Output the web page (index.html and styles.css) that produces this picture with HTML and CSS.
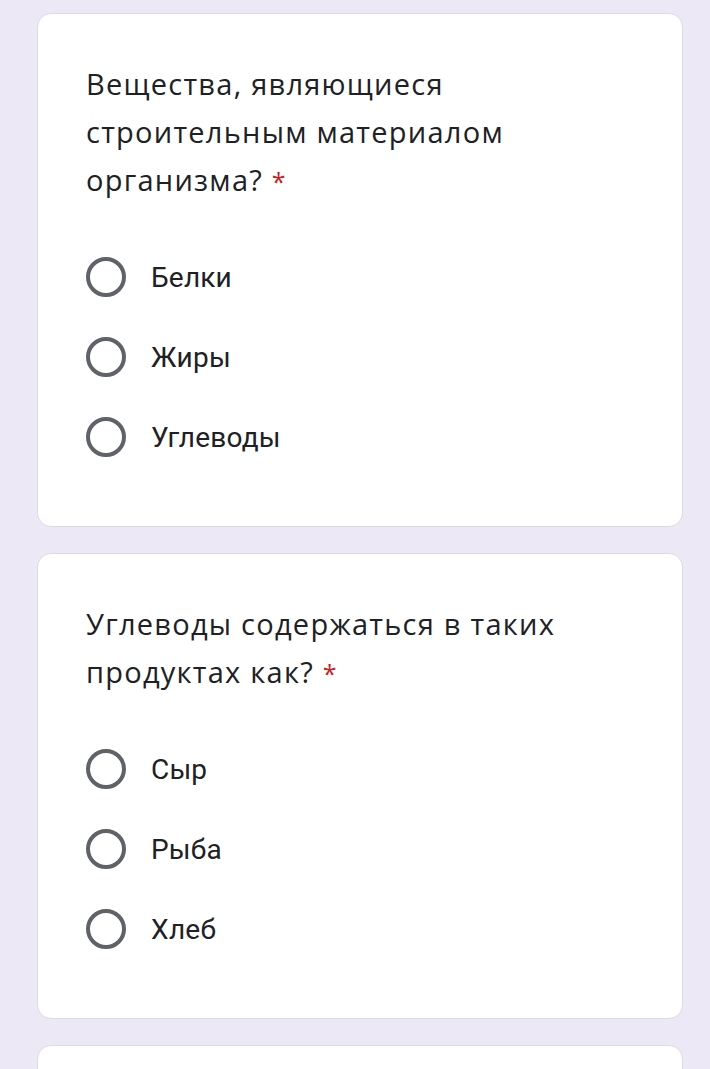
FILE: index.html
```html
<!DOCTYPE html>
<html lang="ru">
<head>
<meta charset="utf-8">
<link rel="stylesheet" href="styles.css">
</head>
<body>
<div class="page">
  <div class="card">
    <div class="question">Вещества, являющиеся строительным материалом организма? <span class="req">*</span></div>
    <div class="options">
      <div class="option"><span class="radio"></span><span class="label">Белки</span></div>
      <div class="option"><span class="radio"></span><span class="label">Жиры</span></div>
      <div class="option"><span class="radio"></span><span class="label">Углеводы</span></div>
    </div>
  </div>
  <div class="card">
    <div class="question">Углеводы содержаться в таких продуктах как? <span class="req">*</span></div>
    <div class="options">
      <div class="option"><span class="radio"></span><span class="label">Сыр</span></div>
      <div class="option"><span class="radio"></span><span class="label">Рыба</span></div>
      <div class="option"><span class="radio"></span><span class="label">Хлеб</span></div>
    </div>
  </div>
  <div class="card card-stub"></div>
</div>
</body>
</html>
```

FILE: styles.css
```css
html, body {
  margin: 0;
  padding: 0;
  background: #ece8f6;
}
.page {
  display: flex;
  flex-direction: column;
  gap: 26px;
  padding: 13px 27px 0 37px;
}
.card {
  width: 646px;
  box-sizing: border-box;
  background: #ffffff;
  border: 1px solid #dadce0;
  border-radius: 14px;
  padding: 46px 48px 49px 48px;
}
.card-stub {
  height: 200px;
}
.question {
  font-family: "Open Sans", Roboto, sans-serif;
  font-size: 29px;
  line-height: 48px;
  letter-spacing: 1.25px;
  color: #202124;
  width: 500px;
}
.req {
  color: #c5221f;
  font-size: 25px;
  line-height: 0;
  letter-spacing: 0;
}
.options {
  margin-top: 33px;
  display: flex;
  flex-direction: column;
}
.option {
  height: 80px;
  display: flex;
  align-items: center;
  gap: 25px;
}
.radio {
  width: 40px;
  height: 40px;
  box-sizing: border-box;
  border: 4px solid #5f6368;
  border-radius: 50%;
  flex: none;
}
.label {
  font-family: Roboto, sans-serif;
  font-size: 28px;
  letter-spacing: 0.2px;
  color: #202124;
}
```
